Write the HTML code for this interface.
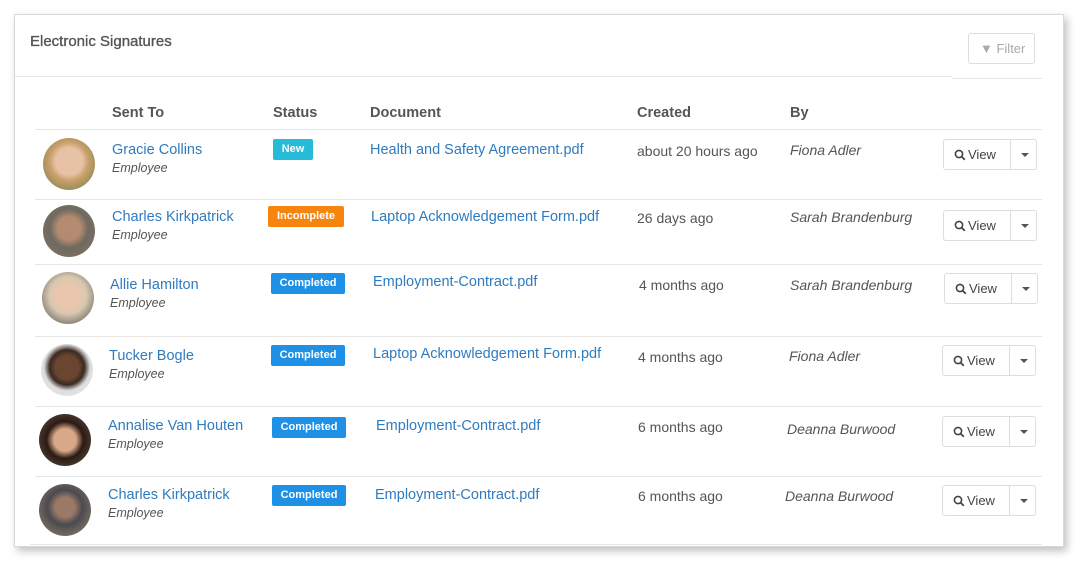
<!DOCTYPE html><html><head><style>
*{margin:0;padding:0;box-sizing:border-box}
body{width:1080px;height:563px;background:#fff;font-family:"Liberation Sans",sans-serif;position:relative;overflow:hidden}
.card{position:absolute;left:14px;top:14px;width:1050px;height:533px;border:1px solid #d8d8d8;background:#fff;box-shadow:3px 4px 8px rgba(0,0,0,.25)}
.a{position:absolute;white-space:nowrap;margin-top:2px}
.t{font-size:15px;color:#555;font-weight:normal;-webkit-text-stroke:.35px #555}
.h{font-size:14.5px;font-weight:bold;color:#555}
.n{font-size:14.5px;color:#2f7bbf}
.e{font-size:12.5px;font-style:italic;color:#555}
.c{font-size:14px;color:#555}
.b{font-size:14px;font-style:italic;color:#555}
.bd{position:absolute;height:21px;border-radius:2px;color:#fff;font-size:11px;font-weight:bold;text-align:center;line-height:21px}
.line{position:absolute;height:1px;background:#e6e6e6}
.av{position:absolute;width:52px;height:52px;border-radius:50%}
.btn{position:absolute;width:94px;height:31px;border:1px solid #ddd;border-radius:3px;font-size:13px;color:#444}
.btn span{position:absolute;left:10px;top:7px;display:flex;align-items:center;gap:2px}
.btn i{position:absolute;left:66px;top:0;width:1px;height:29px;background:#ddd}
.btn b{position:absolute;left:77px;top:13px;border:4px solid transparent;border-top:4px solid #555;border-bottom:0;width:0;height:0}
</style></head><body>
<svg width="0" height="0" style="position:absolute"><defs><symbol id="mg" viewBox="0 0 12 12"><circle cx="5" cy="5" r="3.6" fill="none" stroke="#444" stroke-width="1.6"/><path d="M7.6 7.6L10.8 10.8" stroke="#444" stroke-width="1.8"/></symbol></defs></svg>
<div class="card"></div>
<div class="a t" style="left:30px;top:31px">Electronic Signatures</div>
<div class="a" style="left:968px;top:31px;width:67px;height:31px;border:1px solid #ddd;border-radius:3px;color:#aaa;font-size:13px;padding:7px 0 0 11px">&#9660;&#xFE0E; Filter</div>
<div class="line" style="left:15px;top:76px;width:937px"></div>
<div class="line" style="left:952px;top:78px;width:90px"></div>
<div class="a h" style="left:112px;top:103px">Sent To</div>
<div class="a h" style="left:273px;top:103px">Status</div>
<div class="a h" style="left:370px;top:103px">Document</div>
<div class="a h" style="left:637px;top:103px">Created</div>
<div class="a h" style="left:790px;top:103px">By</div>
<div class="line" style="left:35px;top:129px;width:1007px"></div>

<div class="av" style="left:43px;top:138px;background:radial-gradient(circle at 50% 45%,#e8c2a6 0 35%,#c9a06a 50%,#6a7a4a 100%)"></div>
<div class="a n" style="left:112px;top:140px">Gracie Collins</div>
<div class="a e" style="left:112px;top:159px">Employee</div>
<div class="bd" style="left:273px;top:139px;width:40px;background:#26bcd7">New</div>
<div class="a n" style="left:370px;top:140px">Health and Safety Agreement.pdf</div>
<div class="a c" style="left:637px;top:141px">about 20 hours ago</div>
<div class="a b" style="left:790px;top:140px">Fiona Adler</div>
<div class="btn" style="left:943px;top:139px"><span><svg width="12" height="12"><use href="#mg"/></svg>View</span><i></i><b></b></div>
<div class="line" style="left:35px;top:199px;width:1007px"></div>

<div class="av" style="left:43px;top:205px;background:radial-gradient(circle at 50% 45%,#b48a70 0 30%,#6e6a60 50%,#8a7460 100%)"></div>
<div class="a n" style="left:112px;top:207px">Charles Kirkpatrick</div>
<div class="a e" style="left:112px;top:226px">Employee</div>
<div class="bd" style="left:268px;top:206px;width:76px;background:#f5850f">Incomplete</div>
<div class="a n" style="left:371px;top:207px">Laptop Acknowledgement Form.pdf</div>
<div class="a c" style="left:637px;top:208px">26 days ago</div>
<div class="a b" style="left:790px;top:207px">Sarah Brandenburg</div>
<div class="btn" style="left:943px;top:210px"><span><svg width="12" height="12"><use href="#mg"/></svg>View</span><i></i><b></b></div>
<div class="line" style="left:35px;top:264px;width:1007px"></div>

<div class="av" style="left:42px;top:272px;background:radial-gradient(circle at 50% 45%,#eac6ae 0 30%,#d8c8b0 48%,#444 100%)"></div>
<div class="a n" style="left:110px;top:275px">Allie Hamilton</div>
<div class="a e" style="left:110px;top:294px">Employee</div>
<div class="bd" style="left:271px;top:273px;width:74px;background:#1e90e6">Completed</div>
<div class="a n" style="left:373px;top:272px">Employment-Contract.pdf</div>
<div class="a c" style="left:639px;top:275px">4 months ago</div>
<div class="a b" style="left:790px;top:275px">Sarah Brandenburg</div>
<div class="btn" style="left:944px;top:273px"><span><svg width="12" height="12"><use href="#mg"/></svg>View</span><i></i><b></b></div>
<div class="line" style="left:35px;top:336px;width:1007px"></div>

<div class="av" style="left:41px;top:344px;background:radial-gradient(circle at 50% 45%,#6a4630 0 30%,#3a2a20 45%,#ddd 60%,#eee 100%)"></div>
<div class="a n" style="left:109px;top:346px">Tucker Bogle</div>
<div class="a e" style="left:109px;top:365px">Employee</div>
<div class="bd" style="left:271px;top:345px;width:74px;background:#1e90e6">Completed</div>
<div class="a n" style="left:373px;top:344px">Laptop Acknowledgement Form.pdf</div>
<div class="a c" style="left:638px;top:347px">4 months ago</div>
<div class="a b" style="left:789px;top:346px">Fiona Adler</div>
<div class="btn" style="left:942px;top:345px"><span><svg width="12" height="12"><use href="#mg"/></svg>View</span><i></i><b></b></div>
<div class="line" style="left:35px;top:406px;width:1007px"></div>

<div class="av" style="left:39px;top:414px;background:radial-gradient(circle at 50% 50%,#d8a888 0 30%,#2a1a14 50%,#6a5a4a 100%)"></div>
<div class="a n" style="left:108px;top:416px">Annalise Van Houten</div>
<div class="a e" style="left:108px;top:435px">Employee</div>
<div class="bd" style="left:272px;top:417px;width:74px;background:#1e90e6">Completed</div>
<div class="a n" style="left:376px;top:416px">Employment-Contract.pdf</div>
<div class="a c" style="left:638px;top:417px">6 months ago</div>
<div class="a b" style="left:787px;top:419px">Deanna Burwood</div>
<div class="btn" style="left:942px;top:416px"><span><svg width="12" height="12"><use href="#mg"/></svg>View</span><i></i><b></b></div>
<div class="line" style="left:35px;top:476px;width:1007px"></div>

<div class="av" style="left:39px;top:484px;background:radial-gradient(circle at 50% 45%,#9a7a66 0 25%,#4a4a50 45%,#a08870 100%)"></div>
<div class="a n" style="left:108px;top:485px">Charles Kirkpatrick</div>
<div class="a e" style="left:108px;top:504px">Employee</div>
<div class="bd" style="left:272px;top:485px;width:74px;background:#1e90e6">Completed</div>
<div class="a n" style="left:375px;top:485px">Employment-Contract.pdf</div>
<div class="a c" style="left:638px;top:486px">6 months ago</div>
<div class="a b" style="left:785px;top:486px">Deanna Burwood</div>
<div class="btn" style="left:942px;top:485px"><span><svg width="12" height="12"><use href="#mg"/></svg>View</span><i></i><b></b></div>
<div class="line" style="left:30px;top:544px;width:1012px"></div>
</body></html>
